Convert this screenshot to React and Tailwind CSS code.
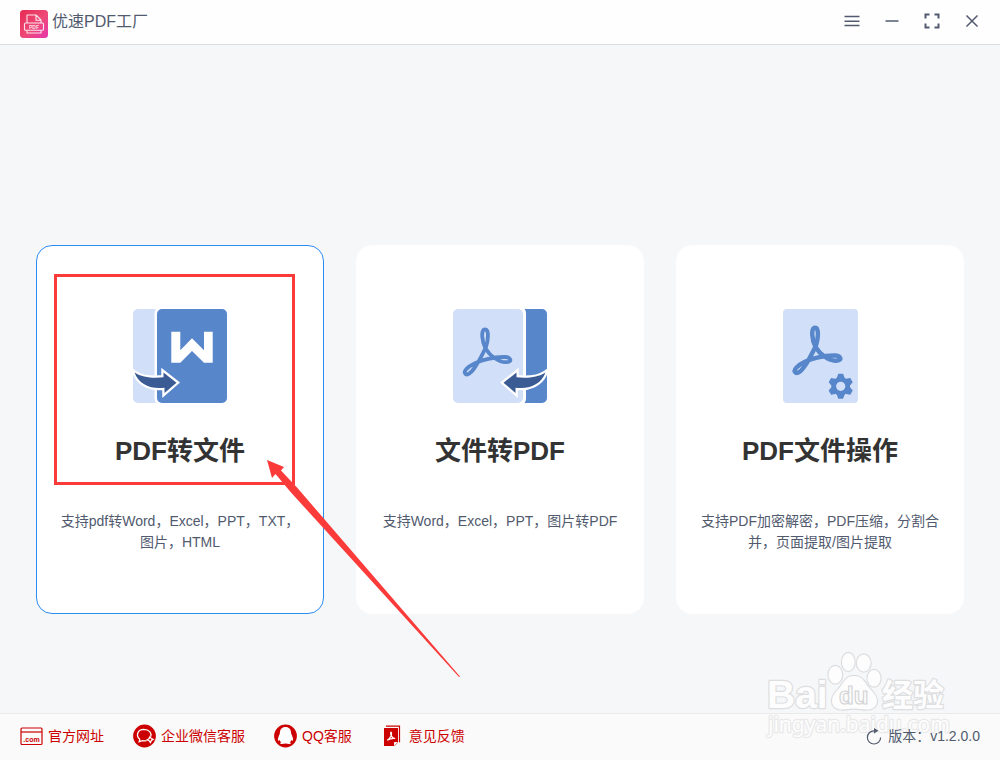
function AppLogo() {
  return (
    <svg viewBox="0 0 28 28" className="h-7 w-7 shrink-0" aria-hidden="true">
      <defs>
        <linearGradient id="logoFill" x1="0" y1="0" x2="1" y2="1">
          <stop offset="0" stopColor="#e62a52" />
          <stop offset="0.55" stopColor="#ee4a78" />
          <stop offset="1" stopColor="#e636ae" />
        </linearGradient>
      </defs>
      <rect width="28" height="28" rx="3.5" fill="url(#logoFill)" />
      <g fill="none" stroke="#fff" strokeOpacity="0.85" strokeWidth="1.1" strokeLinejoin="round">
        <path d="M7 13V5h9l5 5v3M16 5v5.2h5" />
        <rect x="4.5" y="13" width="19" height="7.2" rx="1" />
        <path d="M7 20.5V23h14v-2.5" />
      </g>
      <text x="14" y="18.7" textAnchor="middle" fontSize="5" fontWeight="700" fill="#fff" fillOpacity="0.85" fontFamily="Liberation Sans">PDF</text>
    </svg>
  );
}

function WindowIcon({ d, strokeWidth = 1.5 }) {
  return (
    <svg viewBox="0 0 16 16" className="h-4 w-4" fill="none" stroke="currentColor" strokeWidth={strokeWidth} aria-hidden="true">
      <path d={d} />
    </svg>
  );
}

const swoosh =
  'M1.5 63.5C9 68.5 20 69.5 30.500 68.300V63.500L43.500 73.700L31.500 84V78.700C19 80.500 6 76 1.500 63.500Z';
const acrobat =
  'M33 38C35 32 36.500 20.300 32 20.300C27.500 20.300 29 33 32.500 39.500C37 47 46 53.500 53 53.200C60 53 58 47.800 51 48C42 48.300 30 50.500 22 54.200C14 58 10 62.500 12.500 65C16.500 68 24 57 33 38Z';

function ToFileIcon() {
  return (
    <svg viewBox="0 0 94 94" className="h-[94px] w-[94px]" aria-hidden="true">
      <rect width="30" height="94" rx="5" fill="#d1dff8" />
      <rect x="21.5" y="-2" width="12" height="98" rx="6" fill="#fff" />
      <rect x="24" width="70" height="94" rx="5" fill="#5786ca" />
      <path d="M38.300 22.700h9v18.600l11.700-12l12 12V22.700h8.700v31H71L59 42L47.300 53.700h-9z" fill="#fff" />
      <path d={swoosh} fill="#3a5b94" stroke="#fff" strokeWidth="4.5" paintOrder="stroke" />
    </svg>
  );
}

function ToPdfIcon() {
  return (
    <svg viewBox="0 0 94 94" className="h-[94px] w-[94px]" aria-hidden="true">
      <rect x="64" width="30" height="94" rx="5" fill="#5786ca" />
      <rect x="60" y="-2" width="13" height="98" rx="6" fill="#fff" />
      <rect width="70" height="94" rx="5" fill="#d1dff8" />
      <path d={acrobat} fill="none" stroke="#5786ca" strokeWidth="3.8" />
      <path d={swoosh} transform="matrix(-1 0 0 1 94 0)" fill="#3a5b94" stroke="#fff" strokeWidth="4.5" paintOrder="stroke" />
    </svg>
  );
}

function OperateIcon() {
  return (
    <svg viewBox="0 0 75 94" className="h-[94px] w-[75px]" aria-hidden="true">
      <rect width="75" height="94" rx="4" fill="#d1dff8" />
      <path d={acrobat} transform="translate(0 -1.500)" fill="none" stroke="#5786ca" strokeWidth="4.400" />
      <g transform="translate(57.700 77.300)" fill="#5786ca">
        <circle r="9.200" />
        {[0, 60, 120, 180, 240, 300].map((deg) => (
          <path key={deg} d="M-4.500 -7L-2.400 -12.500H2.400L4.500 -7z" transform={`rotate(${deg})`} />
        ))}
        <circle r="4.600" fill="#d1dff8" />
      </g>
    </svg>
  );
}

function WebsiteIcon() {
  return (
    <svg viewBox="0 0 24 24" className="h-6 w-6" aria-hidden="true">
      <rect x="1" y="4" width="21" height="16.500" rx="1" fill="none" stroke="#cc0000" strokeWidth="1.200" />
      <path d="M1 8h21" stroke="#cc0000" strokeWidth="1.200" />
      <text x="11.500" y="17.500" textAnchor="middle" fontSize="7" fontWeight="700" fill="#cc0000" fontFamily="Liberation Sans">.com</text>
    </svg>
  );
}

function WechatIcon() {
  return (
    <svg viewBox="0 0 24 24" className="h-6 w-6" aria-hidden="true">
      <circle cx="11.500" cy="12" r="11.400" fill="#cc0000" />
      <g fill="none" stroke="#fff" strokeWidth="1.300">
        <path d="M13.500 16.700c-1.500.4-3 .3-4.300-.1L6.200 17.800l.6-2.600C2.500 11.500 4.500 5.500 10.800 5.300c5.500 0 8 3.700 7 7.200" />
        <path d="M17 12.800l1.200 1.700l2 .8l-1.800 1.200l-1 2l-1.300-1.800l-2-.8l1.800-1.200z" />
      </g>
    </svg>
  );
}

function QQIcon() {
  return (
    <svg viewBox="0 0 24 24" className="h-6 w-6" aria-hidden="true">
      <circle cx="11.500" cy="12" r="11.400" fill="#cc0000" />
      <path
        d="M11.500 3c-3.700 0-5.600 2.600-5.600 6c0 1.300-2 4.200-2 6.500c0 1.600.8 1.500 1.700.4c.3.900.8 1.700 1.500 2.300c-2.500 1.300-.5 2.400 4.400 1.300c4.900 1.100 6.900 0 4.400-1.300c.7-.6 1.200-1.400 1.500-2.300c.9 1.100 1.700 1.200 1.700-.4c0-2.300-2-5.200-2-6.500c0-3.400-1.900-6-5.600-6z"
        fill="#fff"
      />
    </svg>
  );
}

function FeedbackIcon() {
  return (
    <svg viewBox="0 0 24 24" className="h-6 w-6" aria-hidden="true">
      <path d="M5 2.200h13.500v16" fill="none" stroke="#cc0000" strokeWidth="1.200" />
      <path d="M3 4h14v14.500l-3.500 3.500H3z" fill="#cc0000" />
      <path d="M16.500 18.500h-3v3" fill="#fafafa" stroke="#fafafa" />
      <path d="M10 8c.8 0 .6 2 .2 3.500c.7 1.600 2 2.900 4 3c-2.400-.2-5.500.3-8 1.800c2-1.200 3.300-3 4-4.800c-.5-1.300-.9-3.300-.2-3.500z" fill="none" stroke="#fff" strokeWidth="1.200" />
    </svg>
  );
}

function RefreshIcon() {
  return (
    <svg viewBox="0 0 16 18" className="h-[18px] w-4" aria-hidden="true">
      <path d="M8 3.800A6.600 6.600 0 1 0 14.600 10.400" fill="none" stroke="currentColor" strokeWidth="1.200" />
      <path d="M8 1l4.500 2.700L8 6.500z" fill="currentColor" />
    </svg>
  );
}

function Watermark() {
  return (
    <svg viewBox="0 0 190 95" className="pointer-events-none absolute right-[46px] bottom-[15px] h-[95px] w-[190px]" aria-hidden="true">
      <g fill="#fdfdfd" stroke="#dddee0" strokeWidth="2.400" paintOrder="stroke" strokeLinejoin="round">
        <text x="3" y="58" fontSize="39" fontWeight="700" fontFamily="Liberation Sans">Bai</text>
        <ellipse cx="71.300" cy="24.700" rx="6.800" ry="8.800" />
        <ellipse cx="84.300" cy="12" rx="6.300" ry="9" />
        <ellipse cx="99.700" cy="13" rx="6.800" ry="8.600" />
        <ellipse cx="110" cy="28.300" rx="6.500" ry="8.300" />
        <path d="M90 26c6 0 9 3 12 8c4 6 11 10 11 17c0 6-5 8.500-10 8.500c-5 0-8-1-13-1s-7 1-12 1c-5 0-10-2.500-10-9c0-6 6-10 10-16c3-5 6-8.500 12-8.500z" />
        <text x="118" y="56" fontSize="31" fontWeight="700" fontFamily="Noto Sans CJK SC">经验</text>
        <text x="4" y="82" fontSize="21" stroke="#e9e9ea" fontFamily="Noto Sans">jingyan.baidu.com</text>
      </g>
      <text x="75" y="54" fontSize="24" fontWeight="700" fill="#fdfdfd" stroke="#d3d4d6" strokeWidth="1.200" fontFamily="Liberation Sans">du</text>
    </svg>
  );
}

const cards = [
  { title: 'PDF转文件', desc: '支持pdf转Word，Excel，PPT，TXT，图片，HTML', icon: ToFileIcon, active: true },
  { title: '文件转PDF', desc: '支持Word，Excel，PPT，图片转PDF', icon: ToPdfIcon },
  { title: 'PDF文件操作', desc: '支持PDF加密解密，PDF压缩，分割合并，页面提取/图片提取', icon: OperateIcon },
];

const links = [
  { label: '官方网址', icon: WebsiteIcon },
  { label: '企业微信客服', icon: WechatIcon },
  { label: 'QQ客服', icon: QQIcon },
  { label: '意见反馈', icon: FeedbackIcon },
];

const windowButtons = [
  { label: '菜单', d: 'M.5 3.500h15M.5 8.200h15M.5 12.500h15' },
  { label: '最小化', d: 'M1.500 8h13' },
  { label: '全屏', d: 'M1.500 5.500v-4h4M10.500 1.500h4v4M14.500 10.500v4h-4M5.500 14.500h-4v-4', strokeWidth: 2 },
  { label: '关闭', d: 'M2.500 2.500l11 11M13.500 2.500l-11 11' },
];

function Card({ title, desc, icon: Icon, active }) {
  return (
    <button
      type="button"
      className={`flex h-full w-full flex-col items-center justify-start rounded-2xl border bg-white px-5 pt-[63px] pb-[60px] ${active ? 'border-[#2d8cf0]' : 'border-white'}`}
    >
      <Icon />
      <span className="mt-8 text-[26px] leading-8 font-bold text-[#333333]">{title}</span>
      <span className="mt-11 text-sm leading-[21px] text-[#515a6e]">{desc}</span>
    </button>
  );
}

// red frame and arrow that point at the first card
function Pointer() {
  return (
    <div className="pointer-events-none">
      <div className="absolute top-[29px] left-[18px] h-[211px] w-[241px] border-3 border-[#fb3a3a]" />
      <svg viewBox="0 0 194 218" className="absolute top-[215px] left-[231px] z-10 h-[218px] w-[194px]" aria-hidden="true">
        <path d="M0 0L5 18L8.500 14L24 32.500L192 217L193 216.500L30 27.500L14 10.500L17 7z" fill="#fb3a3a" />
      </svg>
    </div>
  );
}

export default function App() {
  return (
    <div lang="zh-CN" className="relative flex min-h-screen flex-col bg-[#f5f7f9] font-['Liberation_Sans','Noto_Sans_CJK_SC',sans-serif] text-[#515a6e]">
      <header className="flex items-start border-b border-[#dcdddf] bg-[#fefefe] pt-[10px] pr-2 pb-[6px] pl-5">
        <AppLogo />
        <h1 className="ml-1 text-base leading-6">优速PDF工厂</h1>
        <div className="ml-auto flex">
          {windowButtons.map((b) => (
            <button key={b.label} type="button" aria-label={b.label} className="flex h-[22px] w-10 items-center justify-center">
              <WindowIcon d={b.d} strokeWidth={b.strokeWidth} />
            </button>
          ))}
        </div>
      </header>

      <main className="flex-1 px-9 pt-[200px]">
        <div className="grid grid-cols-3 gap-8">
          {cards.map((c) => (
            <div key={c.title} className="relative">
              <Card {...c} />
              {c.active && <Pointer />}
            </div>
          ))}
        </div>
      </main>

      <footer className="flex items-center border-t border-[#e8eaec] bg-[#fafafa] px-5 pt-[10px] pb-3 text-sm leading-6">
        <nav className="flex gap-[29px]">
          {links.map(({ label, icon: Icon }) => (
            <a key={label} href="#" className="flex items-center gap-1 text-[#cc0000]">
              <Icon />
              {label}
            </a>
          ))}
        </nav>
        <Watermark />
        <div className="relative ml-auto flex items-center gap-[6px]">
          <RefreshIcon />
          <span>版本：v1.2.0.0</span>
        </div>
      </footer>
    </div>
  );
}
